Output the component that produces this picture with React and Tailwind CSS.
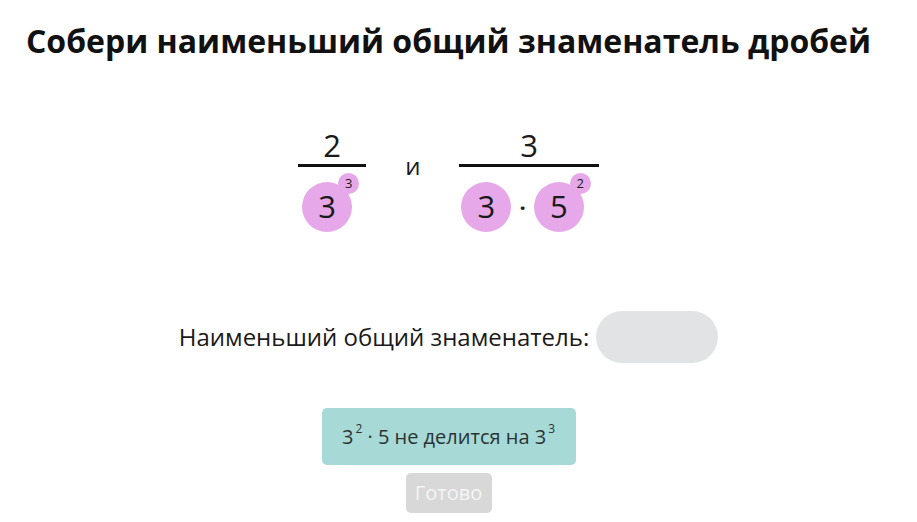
import React from "react";

const FONT = { fontFamily: '"Open Sans", "Noto Sans", sans-serif' };

function Ball({ n, exp }) {
  return (
    <div className="relative flex h-[50px] w-[50px] items-center justify-center rounded-full bg-[#e6a8e8] text-[31px] leading-none text-[#1a1a1a]">
      <span className="-mt-[2px]">{n}</span>
      {exp && (
        <div className="absolute -right-[7px] -top-[9px] flex h-[21px] w-[21px] items-center justify-center rounded-full bg-[#e6a8e8] text-[13px] leading-none">
          {exp}
        </div>
      )}
    </div>
  );
}

function Fraction({ top, children, px }) {
  return (
    <div className="flex flex-col items-center">
      <div className="text-[31px] leading-[38px] text-[#1a1a1a]">{top}</div>
      <div className="h-[3px] w-full bg-[#111]" />
      <div className={`mt-[15px] flex items-center ${px}`}>{children}</div>
    </div>
  );
}

function Sup({ children }) {
  return <span className="relative -top-[11px] ml-[2px] text-[12px] leading-none">{children}</span>;
}

export default function App() {
  return (
    <div style={FONT} className="flex h-[522px] w-[897px] flex-col items-center bg-white text-[#1a1a1a]">
      <h1 className="mt-[19px] text-[32px] font-bold leading-[44px] text-[#111]">
        Собери наименьший общий знаменатель дробей
      </h1>

      {/* Fractions */}
      <div className="mt-[63px] flex items-start gap-[39px]">
        <Fraction top="2" px="pl-[4px] pr-[14px]">
          <Ball n="3" exp="3" />
        </Fraction>
        <div className="mt-[25px] text-[24px] leading-[30px]">и</div>
        <Fraction top="3" px="pl-[2px] pr-[15px]">
          <Ball n="3" />
          <span className="mx-[8px] text-[22px] font-bold leading-none">·</span>
          <Ball n="5" exp="2" />
        </Fraction>
      </div>

      {/* Answer */}
      <div className="mt-[79px] flex items-center gap-[7px]">
        <span className="text-[24px] leading-[30px]">Наименьший общий знаменатель:</span>
        <div className="h-[52px] w-[122px] rounded-full bg-[#e1e3e5]" />
      </div>

      {/* Hint */}
      <div className="mt-[45px] flex h-[57px] w-[254px] items-center justify-center rounded-[5px] bg-[#a7d9d6] text-[20px] leading-[28px] text-[#2a3434]">
        <span>
          3<Sup>2</Sup> · 5 не делится на 3<Sup>3</Sup>
        </span>
      </div>

      <button className="mt-[8px] h-[40px] w-[86px] rounded-[5px] bg-[#d8d8d8] text-[20px] font-medium text-[#f5f5f5]">
        Готово
      </button>
    </div>
  );
}
